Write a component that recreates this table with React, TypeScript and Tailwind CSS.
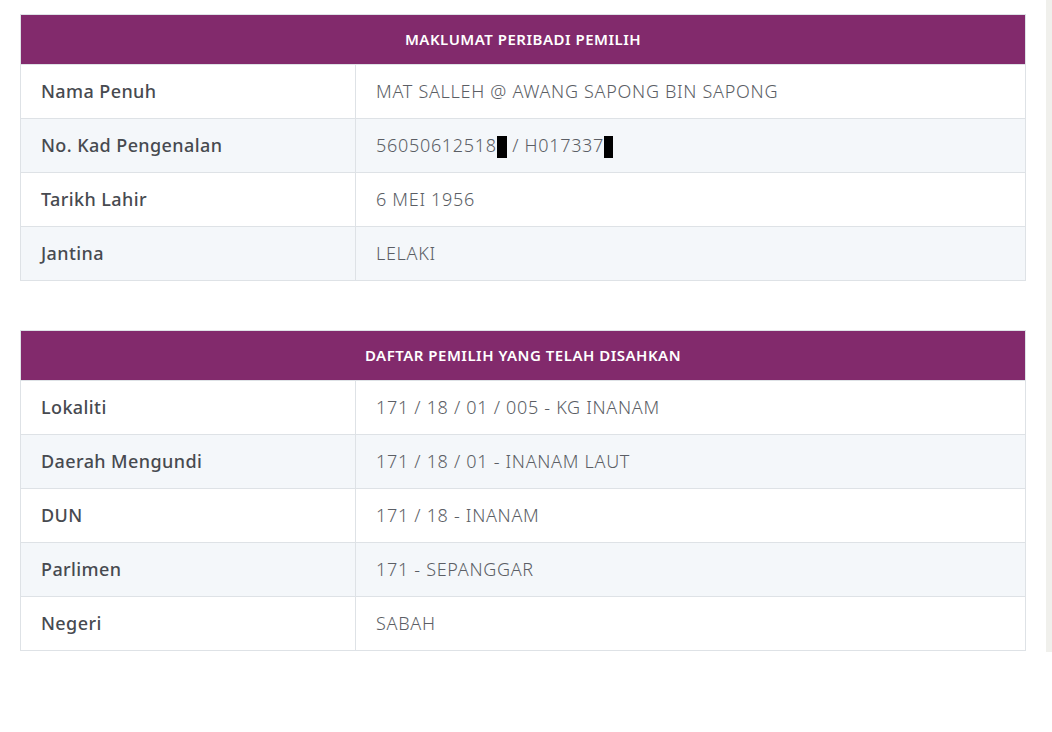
import React from "react";

type Row = { label: string; value: React.ReactNode };

const peribadi: Row[] = [
  { label: "Nama Penuh", value: "MAT SALLEH @ AWANG SAPONG BIN SAPONG" },
  {
    label: "No. Kad Pengenalan",
    value: (
      <>
        56050612518
        <span className="inline-block h-[22px] w-[10px] bg-black align-middle" />
        {" / H017337"}
        <span className="inline-block h-[22px] w-[9px] bg-black align-middle" />
      </>
    ),
  },
  { label: "Tarikh Lahir", value: "6 MEI 1956" },
  { label: "Jantina", value: "LELAKI" },
];

const daftar: Row[] = [
  { label: "Lokaliti", value: "171 / 18 / 01 / 005 - KG INANAM" },
  { label: "Daerah Mengundi", value: "171 / 18 / 01 - INANAM LAUT" },
  { label: "DUN", value: "171 / 18 - INANAM" },
  { label: "Parlimen", value: "171 - SEPANGGAR" },
  { label: "Negeri", value: "SABAH" },
];

function InfoTable({ title, rows }: { title: string; rows: Row[] }) {
  return (
    <table className="w-full border-collapse border border-[#dee2e6]">
      <thead>
        <tr>
          <th
            colSpan={2}
            className="h-[50px] bg-[#822a6c] text-center text-[15px] font-semibold uppercase tracking-[0.5px] text-white"
          >
            {title}
          </th>
        </tr>
      </thead>
      <tbody>
        {rows.map((row, i) => (
          <tr key={row.label} className={i % 2 === 1 ? "bg-[#f4f7fa]" : "bg-white"}>
            <td className="h-[54px] w-[335px] border border-[#dee2e6] pl-5 text-[18px] font-medium tracking-[0.4px] text-[#474a50]">
              {row.label}
            </td>
            <td className="h-[54px] border border-[#dee2e6] pl-5 text-[18px] font-light tracking-[0.7px] text-[#5b5e65]">
              {row.value}
            </td>
          </tr>
        ))}
      </tbody>
    </table>
  );
}

export default function App() {
  return (
    <div className="relative min-h-[732px] bg-white font-['Noto_Sans',sans-serif]">
      <div className="w-[1026px] pl-5 pt-[14px]">
        <InfoTable title="Maklumat Peribadi Pemilih" rows={peribadi} />
        <div className="h-[49px]" />
        <InfoTable title="Daftar Pemilih Yang Telah Disahkan" rows={daftar} />
      </div>
      <div className="absolute right-0 top-0 h-[652px] w-[6px] bg-[#f0f0ec]" />
    </div>
  );
}
